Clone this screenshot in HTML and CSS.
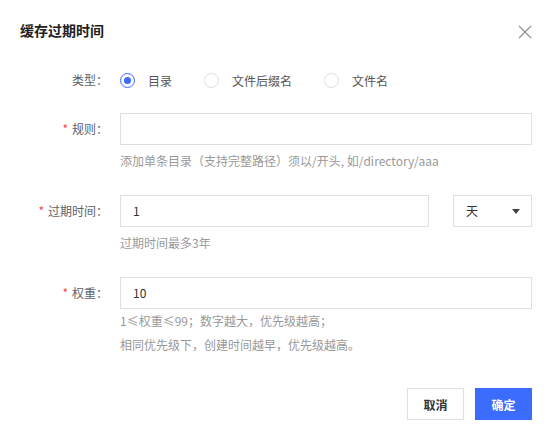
FILE: index.html
```html
<!DOCTYPE html>
<html lang="zh-CN">
<head>
<meta charset="utf-8">
<link rel="stylesheet" href="styles.css">
</head>
<body>
<div class="dialog">
  <div class="header">
    <div class="title">缓存过期时间</div>
    <svg class="close" width="14" height="14" viewBox="0 0 14 14"><path d="M1 1L13 13M13 1L1 13" stroke="#8a8f99" stroke-width="1.2" fill="none"/></svg>
  </div>
  <div class="body">
    <div class="row radio-row">
      <div class="label">类型：</div>
      <div class="control radios">
        <label class="radio checked"><span class="dot"></span>目录</label>
        <label class="radio"><span class="dot"></span>文件后缀名</label>
        <label class="radio"><span class="dot"></span>文件名</label>
      </div>
    </div>
    <div class="row">
      <div class="label"><span class="req">*</span>规则：</div>
      <div class="control">
        <div class="input"></div>
        <div class="hint hint-a">添加单条目录（支持完整路径）须以/开头, 如/directory/aaa</div>
      </div>
    </div>
    <div class="row">
      <div class="label"><span class="req">*</span>过期时间：</div>
      <div class="control">
        <div class="split">
          <div class="input grow">1</div>
          <div class="select">天<span class="caret"></span></div>
        </div>
        <div class="hint hint-a">过期时间最多3年</div>
      </div>
    </div>
    <div class="row">
      <div class="label"><span class="req">*</span>权重：</div>
      <div class="control">
        <div class="input">10</div>
        <div class="hint hint-b">1≤权重≤99；数字越大，优先级越高；</div>
        <div class="hint hint-b">相同优先级下，创建时间越早，优先级越高。</div>
      </div>
    </div>
  </div>
  <div class="footer">
    <button class="btn">取消</button>
    <button class="btn primary">确定</button>
  </div>
</div>
</body>
</html>
```
FILE: styles.css
```css
* { box-sizing: border-box; }
html, body { margin: 0; padding: 0; background: #fff; }
body {
  font-family: "Noto Sans CJK SC", "Noto Sans", sans-serif;
  font-size: 12px;
  color: #333;
}
.dialog { width: 555px; height: 441px; padding: 0 23px 0 20px; }
.header {
  height: 64px;
  padding-top: 20px;
  display: flex;
  justify-content: space-between;
  align-items: flex-start;
}
.title { font-size: 14px; font-weight: 700; line-height: 20px; color: #222; }
.close { margin-top: 5px; margin-right: 0; }
.row { display: flex; margin-bottom: 22px; }
.radio-row { margin-bottom: 17px; }
.label {
  width: 88px;
  flex: none;
  text-align: right;
  line-height: 32px;
  color: #606266;
}
.req { color: #f5484b; margin-right: 4px; }
.control { flex: 1; margin-left: 12px; }
.radios { display: flex; align-items: center; height: 32px; }
.radio { display: flex; align-items: center; color: #555; margin-right: 32px; }
.dot {
  width: 15px; height: 15px; border-radius: 50%;
  border: 1px solid #dcdfe6; margin-right: 13px; position: relative;
}
.radio.checked .dot { border-color: #3c6cfe; }
.radio.checked .dot::after {
  content: ""; position: absolute; left: 3px; top: 3px;
  width: 7px; height: 7px; border-radius: 50%; background: #3c6cfe;
}
.input {
  height: 32px; border: 1px solid #dcdfe6; line-height: 30px;
  padding-left: 12px; color: #333; font-size: 12px;
}
.split { display: flex; gap: 24px; }
.grow { flex: 1; }
.select {
  width: 79px; height: 32px; border: 1px solid #dcdfe6;
  padding-left: 12px; line-height: 30px; position: relative; color: #333;
}
.caret {
  position: absolute; right: 11px; top: 13px;
  width: 0; height: 0;
  border-left: 4px solid transparent; border-right: 4px solid transparent;
  border-top: 5px solid #444;
}
.hint { color: #999; line-height: 24px; }
.hint-a { margin-top: 4px; }
.footer {
  display: flex; justify-content: flex-end; gap: 11px; margin-top: 31px;
}
.btn {
  height: 32px; width: 57px; border: 1px solid #dcdfe6; background: #fff;
  font-family: inherit; font-size: 12px; font-weight: 700; color: #333; padding: 0;
}
.btn.primary { background: #3c6cfe; border-color: #3c6cfe; color: #fff; }
```
